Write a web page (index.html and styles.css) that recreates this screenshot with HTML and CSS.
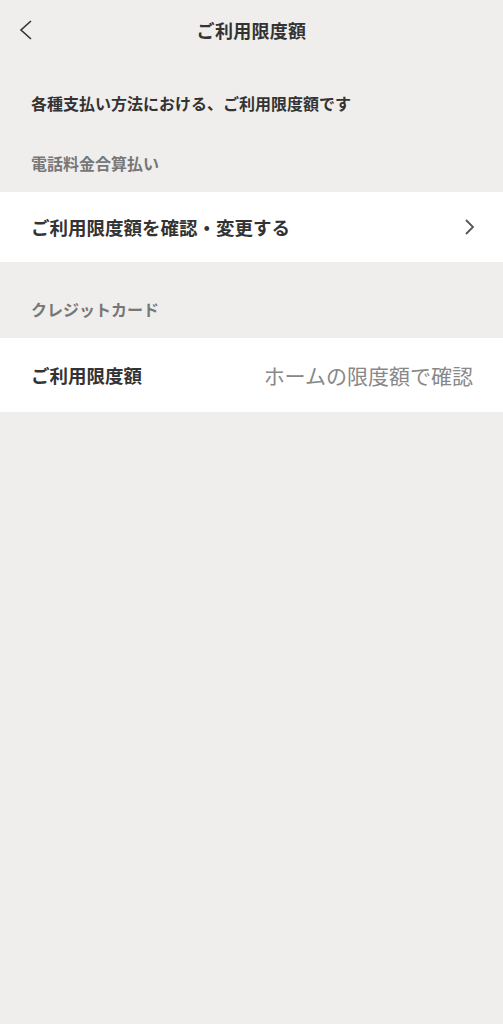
FILE: index.html
```html
<!DOCTYPE html>
<html lang="ja">

<head>
    <meta charset="UTF-8">
    <meta name="viewport" content="width=device-width, initial-scale=1.0">
    <title>ご利用限度額</title>
    <link rel="stylesheet" href="styles.css">
</head>

<body>

    <div class="header">
        <a href="#" class="back">
            <svg width="14" height="20" viewBox="0 0 14 20">
                <path d="M12 1 L2 10 L12 19" fill="none" stroke="#333" stroke-width="1.6" />
            </svg>
        </a>
        <h1>ご利用限度額</h1>
    </div>

    <p class="intro">各種支払い方法における、ご利用限度額です</p>

    <!-- 電話料金合算払い -->
    <div class="section-title">電話料金合算払い</div>
    <a href="#" class="row row-link">
        <span class="row-label">ご利用限度額を確認・変更する</span>
        <svg class="chevron" width="11" height="18" viewBox="0 0 11 18">
            <path d="M2 2 L9 9 L2 16" fill="none" stroke="#555" stroke-width="1.8" />
        </svg>
    </a>

    <!-- クレジットカード -->
    <div class="section-title">クレジットカード</div>
    <div class="row row-tall">
        <span class="row-label">ご利用限度額</span>
        <span class="row-value">ホームの限度額で確認</span>
    </div>

</body>

</html>
```

FILE: styles.css
```css
body {
    font-family: "Noto Sans CJK JP", "Noto Sans", sans-serif;
    background-color: #efeeec;
    color: #333;
    margin: 0;
    padding: 0;
    min-height: 100vh;
}

.header {
    position: relative;
    height: 60px;
    display: flex;
    align-items: center;
    justify-content: center;
}

.header .back {
    position: absolute;
    left: 19px;
    top: 20px;
    display: block;
    line-height: 0;
}

.header h1 {
    margin: 0;
    font-size: 18px;
    font-weight: 700;
    color: #333;
    letter-spacing: 0.3px;
}

.intro {
    margin: 31px 0 0;
    padding: 0 31px;
    font-size: 16px;
    line-height: 24px;
    font-weight: 700;
    color: #333;
}

.section-title {
    margin-top: 36px;
    padding: 0 31px 17px;
    font-size: 16px;
    line-height: 24px;
    font-weight: 700;
    color: #777;
}

.row + .section-title {
    margin-top: 35px;
}

.row {
    display: flex;
    align-items: center;
    justify-content: space-between;
    background-color: #fff;
    height: 70px;
    padding: 0 28px 0 31px;
    text-decoration: none;
    color: #333;
}

.row-tall {
    height: 74px;
    padding-right: 30px;
}

.row-label {
    font-size: 18.5px;
    font-weight: 700;
    color: #333;
}

.row-value {
    font-size: 21px;
    font-weight: 400;
    color: #888;
}

.chevron {
    display: block;
}
```
